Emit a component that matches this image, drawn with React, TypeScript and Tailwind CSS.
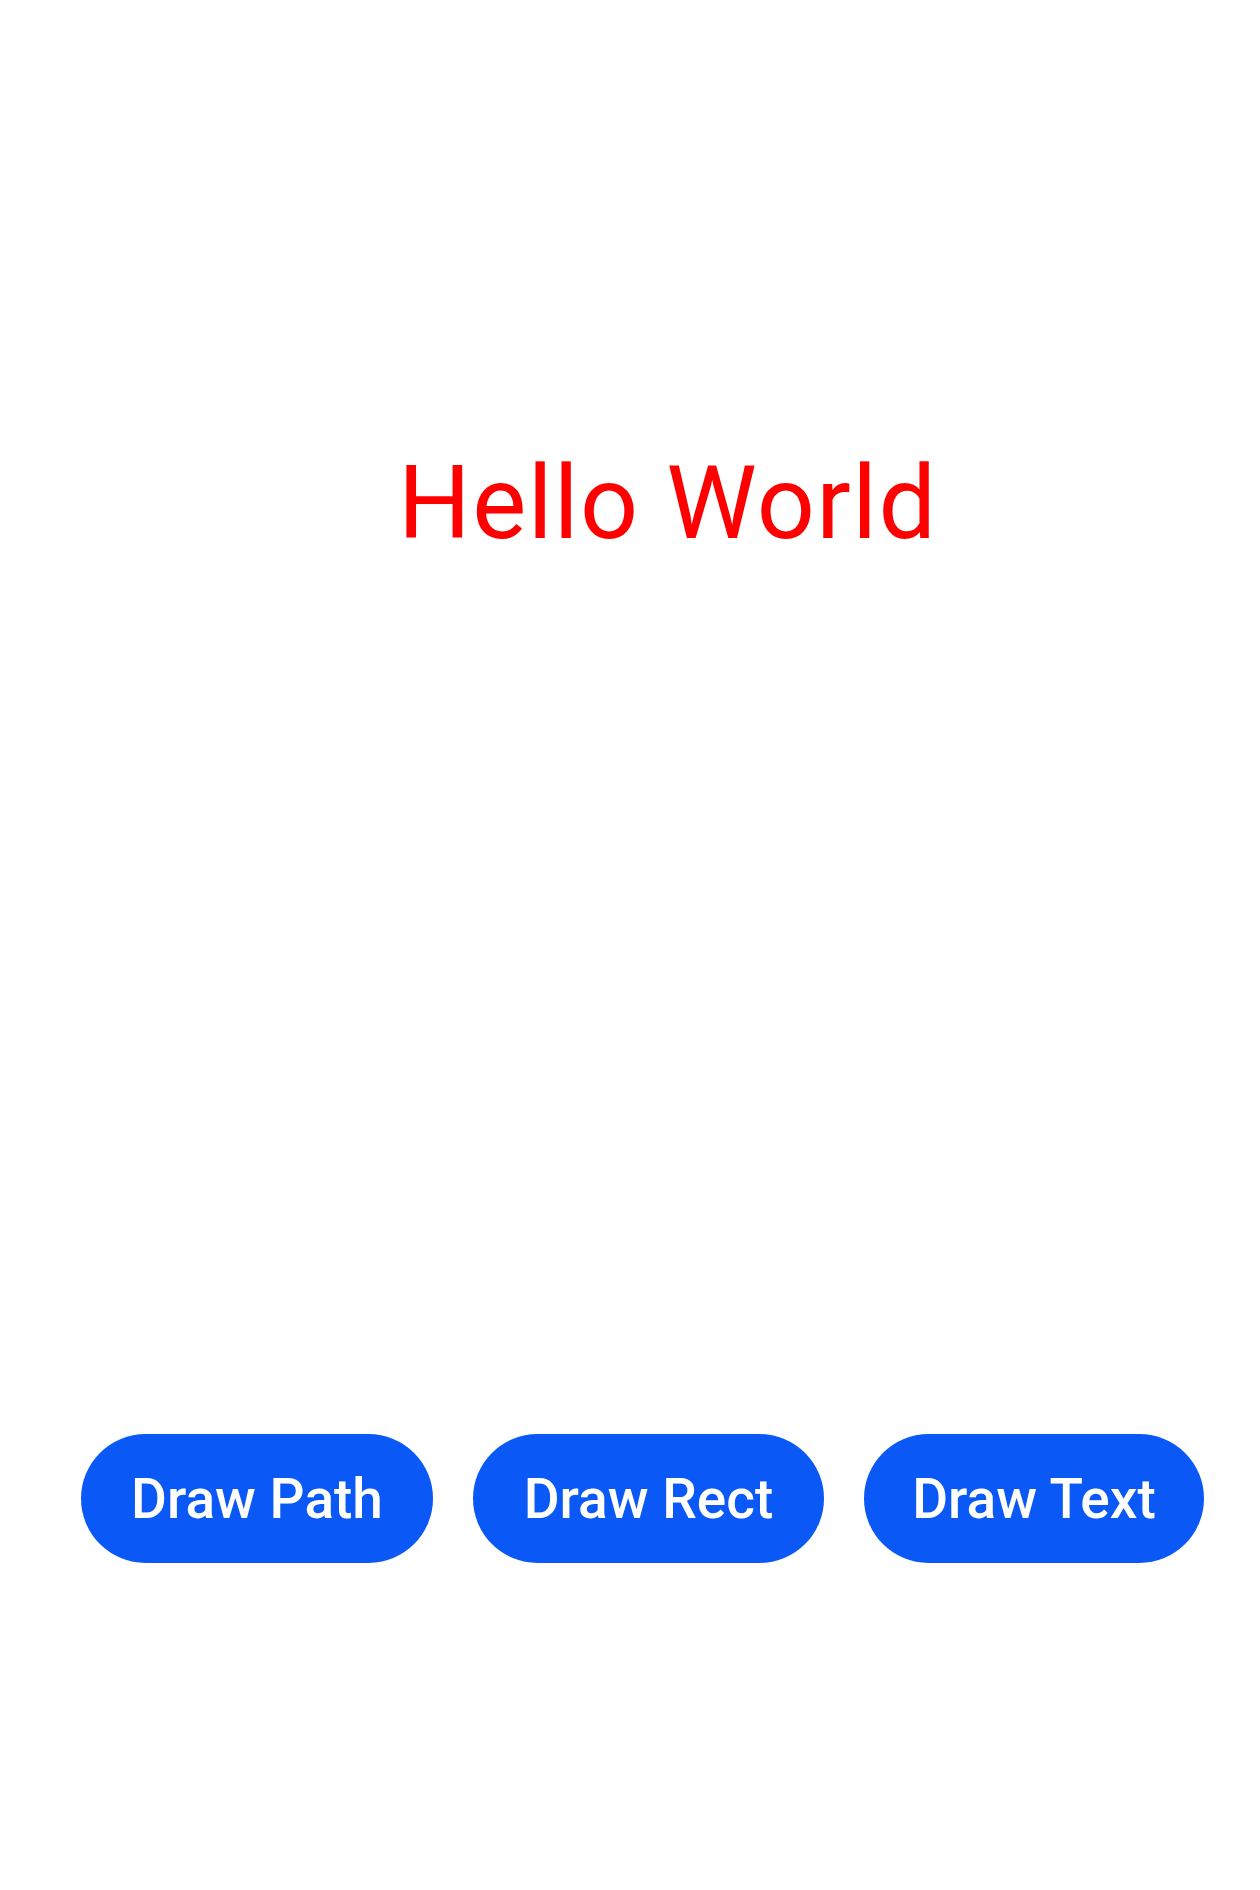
import React from "react";

const buttons = [
  { label: "Draw Path", width: "w-[352px]" },
  { label: "Draw Rect", width: "w-[351px]" },
  { label: "Draw Text", width: "w-[340px]" },
];

export default function App() {
  return (
    <div className="flex min-h-[1890px] w-[1260px] flex-col bg-white font-['Roboto',sans-serif]">
      <div className="pl-[398px] pt-[452px]">
        <span className="block text-[102px] leading-none tracking-[1.4px] text-[#ff0000]">Hello World</span>
      </div>
      <div className="mt-[880px] flex gap-[40px] pl-[81px]">
        {buttons.map((b) => (
          <button
            key={b.label}
            type="button"
            className={`${b.width} flex h-[129px] items-center justify-center rounded-full bg-[#0a59f7] pt-[2px] text-[55px] font-medium leading-none text-white`}
          >
            {b.label}
          </button>
        ))}
      </div>
    </div>
  );
}
